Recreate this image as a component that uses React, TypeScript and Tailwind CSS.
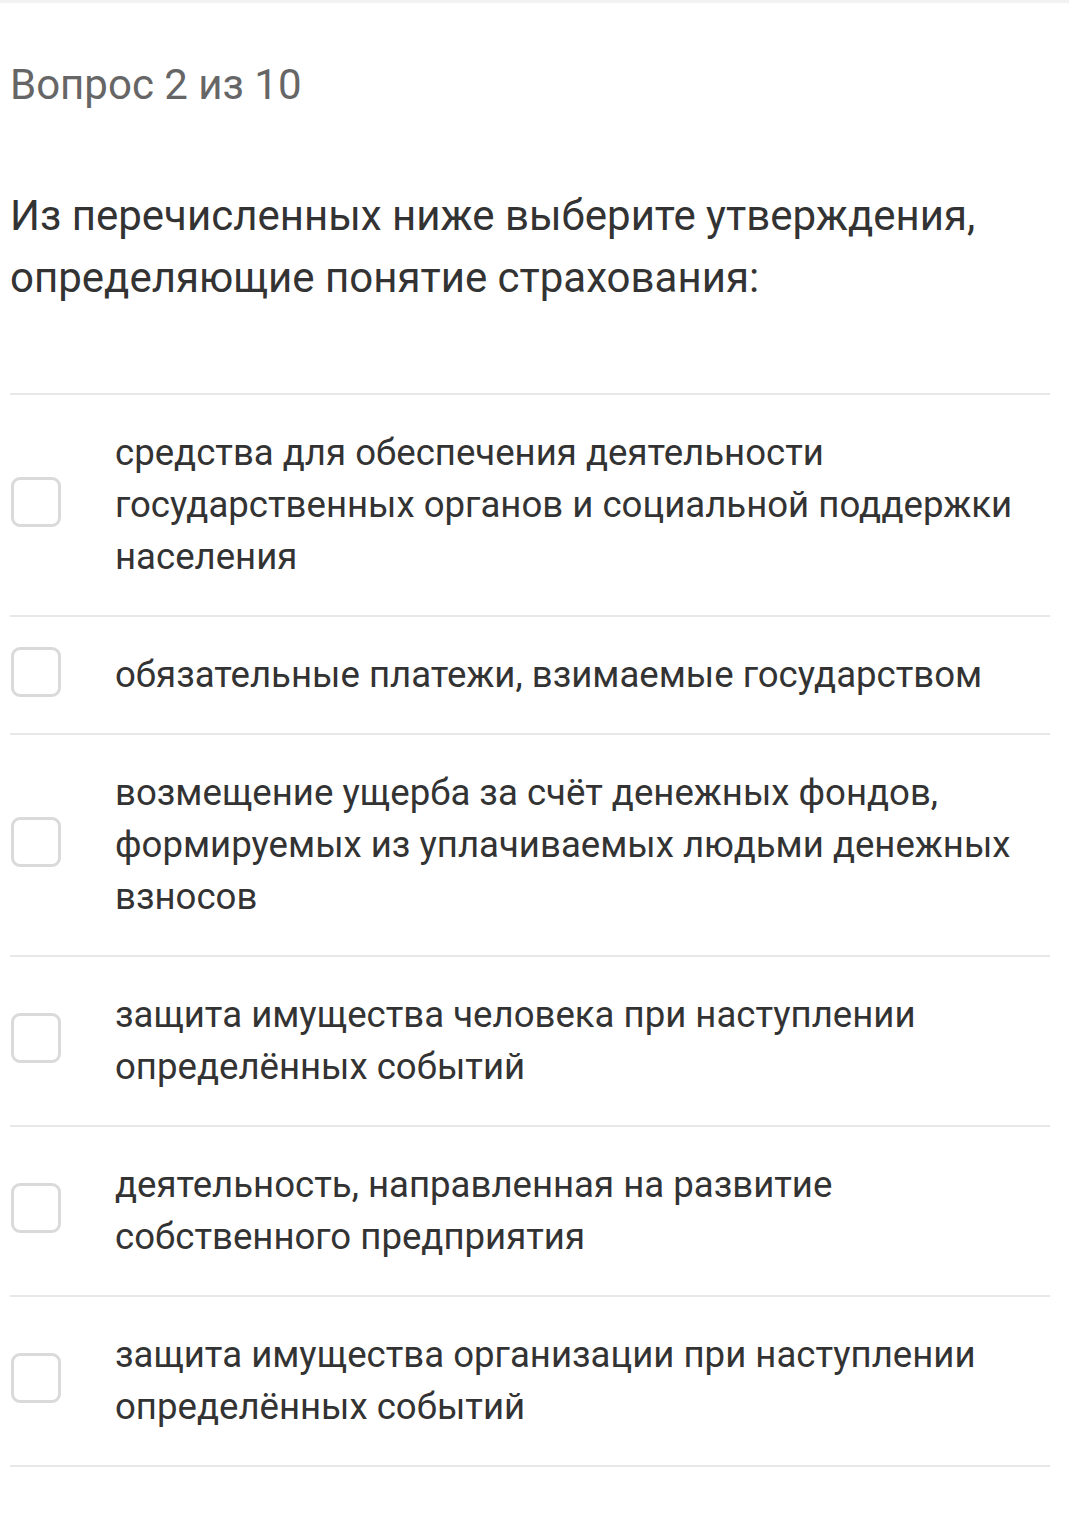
const options = [
  'средства для обеспечения деятельности государственных органов и социальной поддержки населения',
  'обязательные платежи, взимаемые государством',
  'возмещение ущерба за счёт денежных фондов, формируемых из уплачиваемых людьми денежных взносов',
  'защита имущества человека при наступлении определённых событий',
  'деятельность, направленная на развитие собственного предприятия',
  'защита имущества организации при наступлении определённых событий',
];

export default function App() {
  return (
    <div className="min-h-[1530px] w-[1069px] bg-white font-['Roboto',sans-serif] border-t-[3px] border-[#f2f2f2]">
      <div className="pl-[10px] pr-[19px]">
        <div className="pt-[52px] text-[42px] leading-[60px] text-[#666666]">Вопрос 2 из 10</div>
        <div className="mt-[70px] text-[42px] leading-[62px] text-[#333333]">
          Из перечисленных ниже выберите утверждения, определяющие понятие страхования:
        </div>
        <div className="mt-[84px] border-t-2 border-[#e8e8e8]">
          {options.map((text, i) => (
            <label key={i} className="flex items-center border-b-2 border-[#e8e8e8] py-[32px]">
              <span className="ml-px -mt-[6px] h-[50px] w-[50px] shrink-0 rounded-[9px] border-[3px] border-[#dadada] bg-white" />
              <span className="ml-[54px] text-[36.6px] leading-[52px] text-[#333333]">{text}</span>
            </label>
          ))}
        </div>
      </div>
    </div>
  );
}
